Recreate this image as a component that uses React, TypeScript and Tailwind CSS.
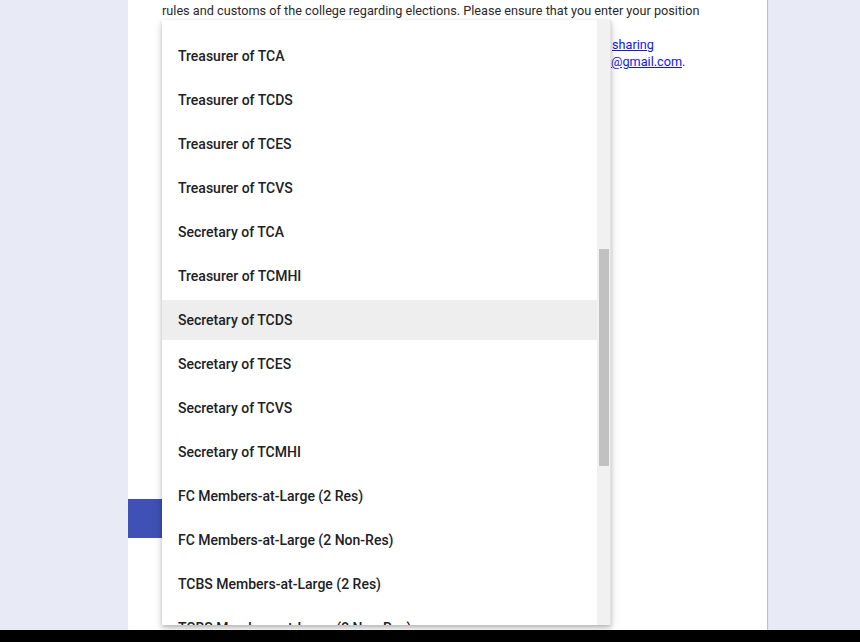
import React from 'react';

const options = [
  'Treasurer of TCA',
  'Treasurer of TCDS',
  'Treasurer of TCES',
  'Treasurer of TCVS',
  'Secretary of TCA',
  'Treasurer of TCMHI',
  'Secretary of TCDS',
  'Secretary of TCES',
  'Secretary of TCVS',
  'Secretary of TCMHI',
  'FC Members-at-Large (2 Res)',
  'FC Members-at-Large (2 Non-Res)',
  'TCBS Members-at-Large (2 Res)',
  'TCBS Members-at-Large (2 Non-Res)',
];

const highlighted = 'Secretary of TCDS';

export default function App() {
  return (
    <div className="flex h-[642px] w-[860px] flex-col overflow-hidden bg-[#e8eaf6] font-['Roboto',sans-serif]">
      <div className="relative h-[630px] shrink-0">
        {/* form card */}
        <div className="ml-[128px] h-full w-[639px] bg-white shadow-[1px_0_1px_rgba(0,0,0,0.18)]">
          <div className="px-[34px] text-[12.7px] leading-[17px] text-[#2a2a2a]">
            <p className="pt-[2px]">
              rules and customs of the college regarding elections. Please ensure that you enter your position
            </p>
            <p className="mt-[17px]">
              <span className="inline-block w-[450px]" />
              <a className="text-[#1515f0] underline">sharing</a>
            </p>
            <p>
              <span className="inline-block w-[449px]" />
              <a className="text-[#1515f0] underline">@gmail.com</a>.
            </p>
          </div>
          <div className="mt-[429px] h-[39px] w-[96px] bg-[#3f51b5]" />
        </div>

        {/* open dropdown */}
        <div className="absolute left-[162px] top-[20px] flex h-[605px] w-[449px] bg-white shadow-[0_2px_4px_rgba(0,0,0,0.2),0_4px_10px_rgba(0,0,0,0.14)]">
          <ul className="flex min-w-0 flex-1 flex-col gap-1 overflow-hidden pt-4">
            {options.map((label) => (
              <li
                key={label}
                className={`flex h-10 shrink-0 items-center px-4 text-[14px] font-medium text-[#202124] ${
                  label === highlighted ? 'bg-[#eeeeee]' : ''
                }`}
              >
                {label}
              </li>
            ))}
          </ul>
          <div className="w-[14px] shrink-0 border-r border-[#e3e3e3] bg-[#f1f1f1] pt-[229px]">
            <div className="ml-[2px] h-[217px] w-[10px] bg-[#c1c1c1]" />
          </div>
        </div>
      </div>
      <div className="h-[12px] shrink-0 bg-black" />
    </div>
  );
}
